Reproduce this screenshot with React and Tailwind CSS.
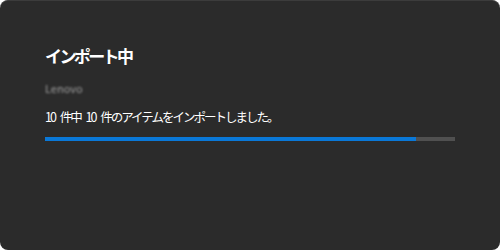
export default function App() {
  return (
    <div className="w-[500px] h-[250px] bg-white">
      <div
        className="w-[500px] h-[250px] rounded-[8px] bg-[#2b2b2b] border-t border-[#3c3c3c] px-[45px] pt-[44px] flex flex-col"
        style={{ fontFamily: '"Noto Sans CJK JP", "Noto Sans", sans-serif' }}
      >
        <div className="text-[17px] font-bold text-white leading-[22px] tracking-[-2.6px]">インポート中</div>
        <div className="mt-[14px] text-[11px] leading-[14px] text-[#a0a0a0] blur-[1px] w-fit">Lenovo</div>
        <div className="mt-[13px] text-[12.5px] leading-[18px] text-white tracking-[-2px] [word-spacing:4px]">
          10 件中 10 件のアイテムをインポートしました。
        </div>
        <div className="mt-[11px] h-[4px] w-[410px] bg-[#505050] flex">
          <div className="h-full w-[371px] bg-[#0a78d7]" />
        </div>
      </div>
    </div>
  );
}
